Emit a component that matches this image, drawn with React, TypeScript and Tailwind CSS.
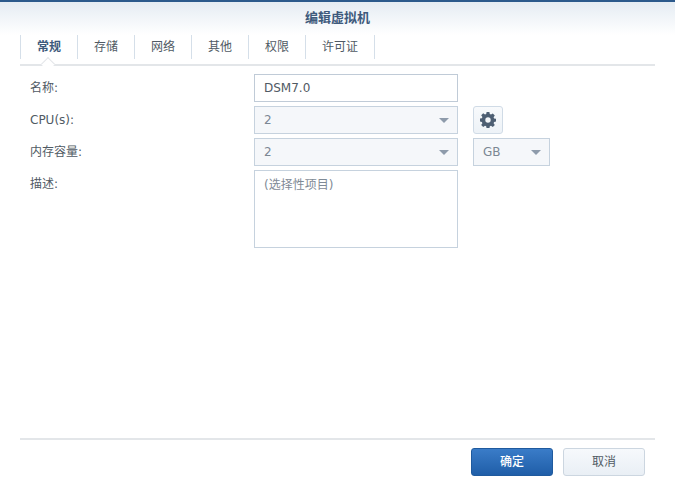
import React from "react";

const font = { fontFamily: '"DejaVu Sans", "Noto Sans CJK SC", sans-serif' };

function Caret() {
  return <span className="w-0 h-0 border-l-[5px] border-r-[5px] border-t-[5px] border-l-transparent border-r-transparent border-t-[#8e9bab]" />;
}

function Gear() {
  return (
    <svg width="16" height="16" viewBox="0 0 16 16">
      <path
        fill="#4d5f73"
        fillRule="evenodd"
        d="M6.6 0h2.8l.4 2.1 1.2.5L12.8 1.400l2 2-1.200 1.800.5 1.200 1.900.4v2.800l-1.900.4-.5 1.200 1.200 1.800-2 2-1.800-1.200-1.200.5-.4 2.100H6.600l-.4-2.100-1.200-.5-1.800 1.200-2-2 1.200-1.800-.5-1.200L0 9.400V6.600l1.900-.4.5-1.200-1.200-1.800 2-2 1.800 1.200 1.200-.5zM8 5.300a2.700 2.700 0 1 0 0 5.400 2.700 2.700 0 0 0 0-5.400z"
      />
    </svg>
  );
}

function Select({ value, className }: { value: string; className: string }) {
  return (
    <div className={`h-7 flex items-center justify-between bg-[#f5f7fa] border border-[#c6d2de] pl-[9px] pr-[8px] text-[#7b8794] ${className}`}>
      <span>{value}</span>
      <Caret />
    </div>
  );
}

const tabs = ["常规", "存储", "网络", "其他", "权限", "许可证"];

export default function App() {
  return (
    <div style={font} className="w-[675px] h-[484px] bg-white flex flex-col overflow-hidden text-[12px] text-[#505a64]">
      <div className="h-[2px] bg-[#2c5a8c]" />
      <div className="h-[33px] bg-gradient-to-b from-[#e5ecf3] to-white flex items-center justify-center font-bold text-[13px] text-[#3e5a7c] pb-[1px]">
        编辑虚拟机
      </div>
      <div className="mx-5 h-[31px] border-b-2 border-[#e3e6e9] relative">
        <div className="flex h-6 border-l border-[#d5dfe9]">
          {tabs.map((t, i) => (
            <div
              key={t}
              className={`shrink-0 whitespace-nowrap flex items-center justify-center border-r border-[#d5dfe9] ${i === 0 ? "font-bold text-[#3e5a7c] w-[57px]" : i === 5 ? "w-[69px]" : "w-[57px]"}`}
            >
              {t}
            </div>
          ))}
        </div>
        <div className="absolute left-[23px] top-[24px] w-[10px] h-[10px] rotate-45 bg-white border-l border-t border-[#e3e6e9]" />
      </div>
      <div className="flex-1 flex">
        <div className="w-[234px] pl-[30px] pt-[8px] flex flex-col">
          <div className="h-[32px] flex items-center pb-[4px]">名称:</div>
          <div className="h-[32px] flex items-center pb-[4px]">CPU(s):</div>
          <div className="h-[32px] flex items-center pb-[4px]">内存容量:</div>
          <div className="h-[32px] flex items-center pb-[4px]">描述:</div>
        </div>
        <div className="pl-[20px] pt-[8px] flex flex-col gap-[4px]">
          <div className="w-[204px] h-7 flex items-center bg-white border border-[#c0cbd7] px-[9px]">DSM7.0</div>
          <div className="flex items-center gap-[15px]">
            <Select value="2" className="w-[204px]" />
            <button className="w-[30px] h-7 flex items-center justify-center rounded-[3px] border border-[#d0dbe6] bg-gradient-to-b from-[#f8fafc] to-[#edf2f7]">
              <Gear />
            </button>
          </div>
          <div className="flex items-center gap-[15px]">
            <Select value="2" className="w-[204px]" />
            <Select value="GB" className="w-[77px]" />
          </div>
          <div className="w-[204px] h-[78px] bg-white border border-[#c6d2de] px-[9px] py-[5px] text-[#7f8a96]">(选择性项目)</div>
        </div>
      </div>
      <div className="mx-5 h-[46px] border-t-2 border-[#e3e6e9] flex items-start justify-end gap-[10px] pt-[8px] pr-[10px]">
        <button className="w-[82px] h-7 rounded-[3px] border border-[#1f5a9e] bg-gradient-to-b from-[#3a7cc8] to-[#1f5ea8] text-white font-medium">确定</button>
        <button className="w-[82px] h-7 rounded-[3px] border border-[#ccd6e0] bg-gradient-to-b from-[#f6f9fc] to-[#e9eff5] text-[#505a64]">取消</button>
      </div>
    </div>
  );
}
